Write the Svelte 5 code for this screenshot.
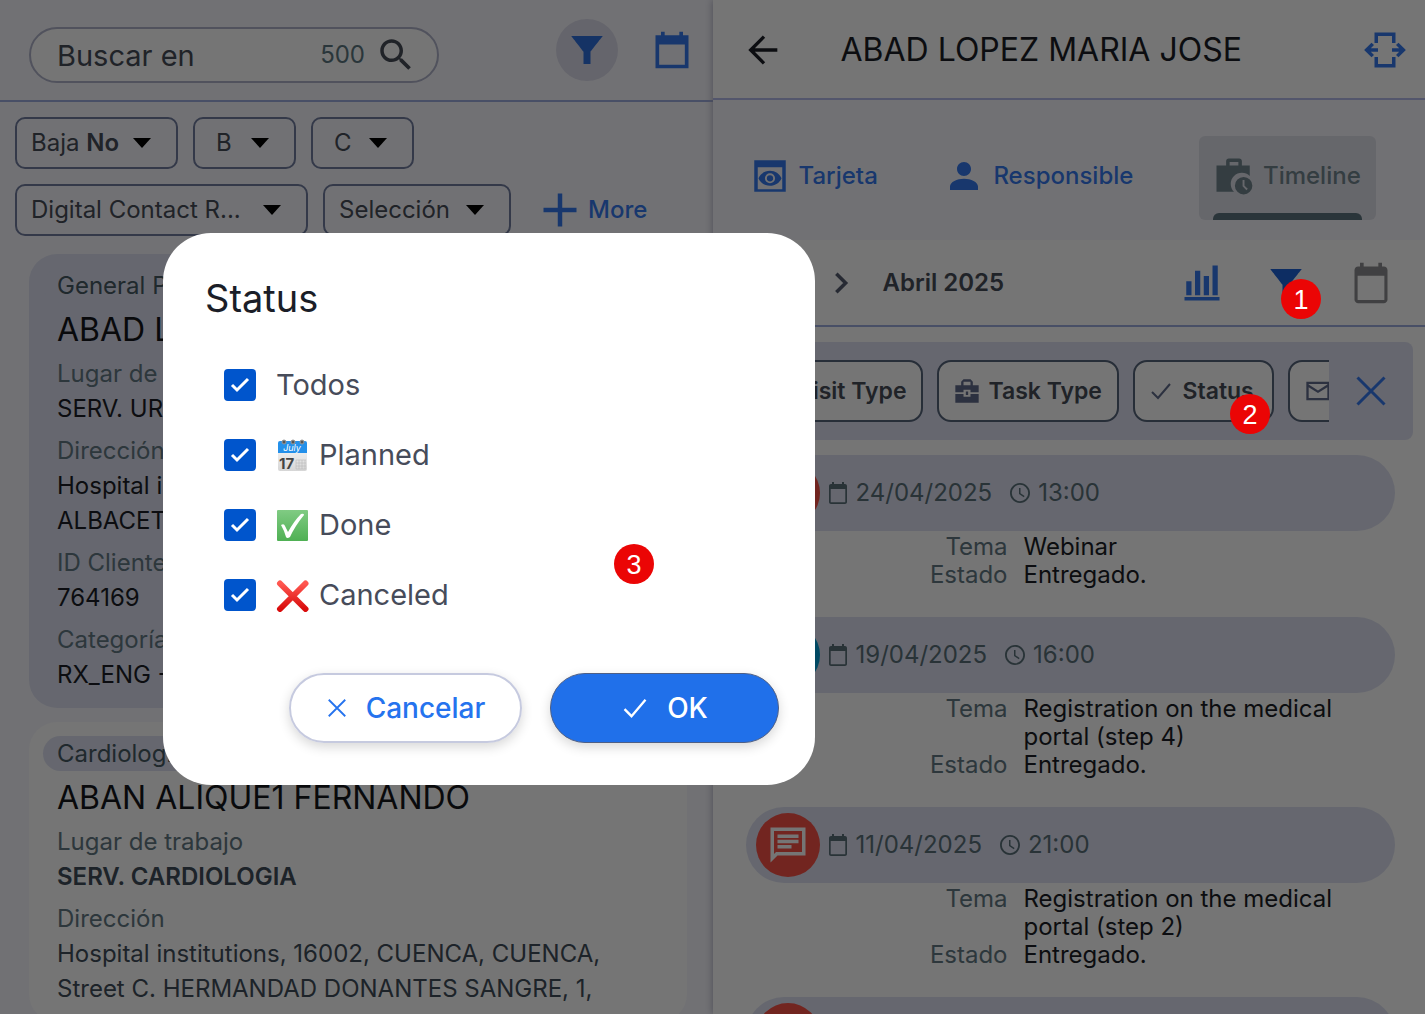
<script>
	let search = $state("");

	const filters = [
		{ label: "Baja", value: "No", size: "md" },
		{ label: "B", size: "sm" },
		{ label: "C", size: "sm" },
		{ label: "Digital Contact R...", size: "xl" },
		{ label: "Selección", size: "lg" },
	];

	const contacts = [
		{
			specialty: "General Practice",
			name: "ABAD LOPEZ MARIA JOSE",
			selected: true,
			fields: [
				{ label: "Lugar de trabajo", lines: ["SERV. URGENCIAS"] },
				{ label: "Dirección", lines: ["Hospital institutions,", "ALBACETE"] },
				{ label: "ID Cliente", lines: ["764169"] },
				{ label: "Categoría", lines: ["RX_ENG - A"] },
			],
		},
		{
			specialty: "Cardiología",
			name: "ABAN ALIQUE1 FERNANDO",
			selected: false,
			fields: [
				{ label: "Lugar de trabajo", lines: ["SERV. CARDIOLOGIA"], strong: true },
				{
					label: "Dirección",
					lines: [
						"Hospital institutions, 16002, CUENCA, CUENCA,",
						"Street C. HERMANDAD DONANTES SANGRE, 1,",
					],
				},
			],
		},
	];

	const events = [
		{ date: "24/04/2025", time: "13:00", color: "red", topic: "Webinar" },
		{ date: "19/04/2025", time: "16:00", color: "cyan", topic: "Registration on the medical portal (step 4)" },
		{ date: "11/04/2025", time: "21:00", color: "red", topic: "Registration on the medical portal (step 2)" },
		{ color: "red" },
	];

	let statuses = $state([
		{ id: "all", label: "Todos", checked: true },
		{ id: "planned", label: "Planned", checked: true },
		{ id: "done", label: "Done", checked: true },
		{ id: "canceled", label: "Canceled", checked: true },
	]);

	// numbered markers that lie over the whole screen
	const markers = [
		{ n: 1, x: 1281, y: 279 },
		{ n: 2, x: 1230, y: 394 },
		{ n: 3, x: 614, y: 544 },
	];

	const paths = {
		search: "M15.5 14h-.79l-.28-.27C15.41 12.59 16 11.11 16 9.5 16 5.91 13.09 3 9.5 3S3 5.91 3 9.5 5.91 16 9.5 16c1.61 0 3.09-.59 4.23-1.57l.27.28v.79l5 4.99L20.49 19l-4.99-5zm-6 0C7.01 14 5 11.99 5 9.5S7.01 5 9.5 5 14 7.01 14 9.5 11.99 14 9.5 14z",
		funnel: "M3 4c2.01 2.59 7 9 7 9v7h4v-7s4.98-6.41 7-9H3z",
		calendar: "M21 4h-3V2h-2v2H8V2H6v2H3v18h18V4zm-2 16H5V9h14v11z",
		calendarRound: "M19 3h-1V1h-2v2H8V1H6v2H5c-1.1 0-2 .9-2 2v16c0 1.1.9 2 2 2h14c1.1 0 2-.9 2-2V5c0-1.1-.9-2-2-2zm.3 18c0 .2-.1.3-.3.3H5c-.2 0-.3-.1-.3-.3V8h14.6v13z",
		person: "M12 12c2.21 0 4-1.79 4-4s-1.79-4-4-4-4 1.79-4 4 1.79 4 4 4zm0 1.500c-4 0-8 1.8-8 4.500v2h16v-2c0-2.700-4-4.500-8-4.500z",
		preview: "M3 3v18h18V3H3zm16 16.500H5V7h14v12.500zM12 9c-3 0-5.500 1.700-6.600 4.300C6.500 15.900 9 17.600 12 17.600s5.500-1.700 6.600-4.300C17.500 10.700 15 9 12 9zm0 7.200a2.900 2.900 0 1 1 0-5.800 2.900 2.900 0 0 1 0 5.800zm0-4.700a1.800 1.800 0 1 0 0 3.600 1.800 1.800 0 0 0 0-3.600z",
		history: "M9 2h6c.8 0 1.500.7 1.500 1.500V6H21v6a6.300 6.300 0 0 0-9 9H2V6h5.500V3.500C7.500 2.700 8.200 2 9 2zM9.500 4v2h5V4h-5zM17.500 12.500a5 5 0 1 1 0 10 5 5 0 0 1 0-10zm-.6 1.800v3.600l2.200 2.200.8-.8-1.900-1.800v-3.200z",
		toolbox: "M9 2h6l2 2v3h5v6h-7v-2H9v2H2V7h5V4zM9 4v3h6V4H9zM2 14.500h7V17h6v-2.500h7V22H2zM11 12.500h2v3h-2z",
		mail: "M22 4H2v16h20V4zm-2 2v.5l-8 5-8-5V6h16zm0 12H4V8.800l8 5 8-5V18z",
		clock: "M12 2C6.480 2 2 6.480 2 12s4.480 10 10 10 10-4.480 10-10S17.520 2 12 2zm0 18.200a8.200 8.200 0 1 1 0-16.400 8.200 8.200 0 0 1 0 16.400zM12.500 7H11v6l4.800 3.200.8-1.300-4.100-2.600z",
		chat: "M4 4h16v12H5.170L4 17.170V4M2 2v20l4-4h16V2H2zm4 10h8v2H6v-2zm0-3h12v2H6V9zm0-3h12v2H6V6z",
		chart: "M3 11h3v8H3zM8 5h3v14H8zM13 8h3v11h-3zM18 2h3v17h-3zM2 20h20v2H2z",
	};

	const strokes = {
		back: "M20 12H4.500M12 4 4 12l8 8",
		next: "M8 4l8 8-8 8",
		plus: "M12 1v22M1 12h22",
		close: "M3 3l18 18M21 3 3 21",
		check: "M3 13l6 6L21 5",
		tick: "M4 12l5 5L20 6",
		transfer: "M7 8V3h10v5M7 16v5h10v-5M1 12h7M5 8.500 1.500 12 5 15.500M16 12h7M19 8.500l3.500 3.500-3.500 3.500",
	};
</script>

{#snippet icon(name, cls)}
	<svg class="icon {cls}" viewBox="0 0 24 24" aria-hidden="true">
		{#if paths[name]}
			<path d={paths[name]} fill="currentColor" fill-rule="evenodd" />
		{:else}
			<path class={name} d={strokes[name]} fill="none" stroke="currentColor" stroke-width="2" />
		{/if}
	</svg>
{/snippet}

<main class="app">
	<section class="list-panel">
		<header class="list-header">
			<label class="search">
				<input type="text" placeholder="Buscar en" aria-label="Buscar en" bind:value={search} />
				<span class="count">500</span>
				{@render icon("search", "s42")}
			</label>
			<button class="round" aria-label="Filter">{@render icon("funnel", "s42")}</button>
			<button class="plain" aria-label="Calendar">{@render icon("calendar", "s44")}</button>
		</header>

		<div class="filters">
			{#each filters as f}
				<button class="filter {f.size}">
					<span>{f.label} {#if f.value}<b>{f.value}</b>{/if}</span>
					<i class="caret"></i>
				</button>
			{/each}
			<button class="more">{@render icon("plus", "s36")} More</button>
		</div>

		<div class="cards">
			{#each contacts as c}
				<article class="card" class:selected={c.selected}>
					<div class="specialty">{c.specialty}</div>
					<h2>{c.name}</h2>
					{#each c.fields as f}
						<dl>
							<dt>{f.label}</dt>
							{#each f.lines as line}
								<dd class:strong={f.strong}>{line}</dd>
							{/each}
						</dl>
					{/each}
				</article>
			{/each}
		</div>
	</section>

	<section class="detail-panel">
		<header class="detail-header">
			<button class="back" aria-label="Back">{@render icon("back", "s40")}</button>
			<h1>ABAD LOPEZ MARIA JOSE</h1>
			<button class="plain" aria-label="Switch">{@render icon("transfer", "s42")}</button>
		</header>

		<nav class="tabs">
			<a href="#card">{@render icon("preview", "s42")} Tarjeta</a>
			<a href="#responsible">{@render icon("person", "s42")} Responsible</a>
			<a href="#timeline" class="active">{@render icon("history", "s42")} Timeline</a>
		</nav>

		<div class="month">
			<button class="next-month" aria-label="Next month">{@render icon("next", "s28")}</button>
			<strong>Abril 2025</strong>
			<button class="plain" aria-label="Statistics">{@render icon("chart", "s42")}</button>
			<button class="plain deep" aria-label="Filter timeline">{@render icon("funnel", "s42")}</button>
			<button class="plain gray" aria-label="Calendar">{@render icon("calendarRound", "s44")}</button>
		</div>

		<div class="types">
			<div class="scroller">
				<button class="type visit">Visit Type</button>
				<button class="type task">{@render icon("toolbox", "s28")} Task Type</button>
				<button class="type status">{@render icon("check", "s24")} Status</button>
				<button class="type mail" aria-label="Mail">{@render icon("mail", "s28")}</button>
			</div>
			<button class="plain" aria-label="Close filters">{@render icon("close", "s36")}</button>
		</div>

		<div class="timeline">
			{#each events as e}
				<article class="event">
					<div class="bar">
						<span class="kind {e.color}">{@render icon("chat", "s42")}</span>
						{#if e.date}
							{@render icon("calendarRound", "s24")}
							<span class="date">{e.date}</span>
							{@render icon("clock", "s24")}
							<span>{e.time}</span>
						{/if}
					</div>
					{#if e.topic}
						<dl class="facts">
							<dt>Tema</dt>
							<dd>{e.topic}</dd>
							<dt>Estado</dt>
							<dd>Entregado.</dd>
						</dl>
					{/if}
				</article>
			{/each}
		</div>
	</section>

	<div class="backdrop"></div>

	<dialog open class="modal" aria-labelledby="modal-title">
		<h2 id="modal-title">Status</h2>
		<div class="options">
			{#each statuses as s}
				<label class="option">
					<span class="box">
						<input type="checkbox" bind:checked={s.checked} />
						{#if s.checked}{@render icon("tick", "s24")}{/if}
					</span>
					{#if s.id === "planned"}
						<svg class="emoji" viewBox="0 0 34 34" aria-hidden="true">
							<defs>
								<linearGradient id="paper" x2="0" y2="1">
									<stop offset="0" stop-color="#fafafa" />
									<stop offset="1" stop-color="#d6d6d6" />
								</linearGradient>
							</defs>
							<rect x="2" y="4" width="29" height="29" rx="2" fill="url(#paper)" />
							<path d="M2 15V5q0-2 2-2h25q2 0 2 2v10z" fill="#2490ea" />
							<g fill="#555" stroke="#999" stroke-width="1">
								<circle cx="8" cy="4" r="2" />
								<circle cx="17" cy="4" r="2" />
								<circle cx="26" cy="4" r="2" />
							</g>
							<path d="M20 22h10M20 25h10M20 28h10M20 31h10M20 22v9M23 22v9M26 22v9M29 22v9" stroke="#bbb" stroke-width="0.600" />
							<text x="16" y="13" class="july">July</text>
							<text x="3" y="31" class="day">17</text>
						</svg>
					{:else if s.id === "done"}
						<svg class="emoji" viewBox="0 0 34 34" aria-hidden="true">
							<defs>
								<linearGradient id="green" x2="0" y2="1">
									<stop offset="0" stop-color="#80cb83" />
									<stop offset="1" stop-color="#4fb054" />
								</linearGradient>
							</defs>
							<rect x="1" y="2" width="31" height="31" rx="1" fill="url(#green)" />
							<path d="M5 17q3-2 4 1l3 6Q18 13 25 6q3-1 3 1-9 11-14 22-3 2-4 0-2-7-5-12z" fill="#fff" />
						</svg>
					{:else if s.id === "canceled"}
						<svg class="emoji" viewBox="0 0 34 34" aria-hidden="true">
							<defs>
								<linearGradient id="red" x2="0" y2="1">
									<stop offset="0" stop-color="#ff5750" />
									<stop offset="1" stop-color="#d90c0c" />
								</linearGradient>
							</defs>
							<path d="M4 5.500 29.500 31M29.500 5.500 4 31" fill="none" stroke="url(#red)" stroke-width="6" stroke-linecap="round" />
						</svg>
					{/if}
					<span>{s.label}</span>
				</label>
			{/each}
		</div>
		<div class="actions">
			<button class="cancel">{@render icon("close", "s22")} Cancelar</button>
			<button class="ok">{@render icon("check", "s28")} OK</button>
		</div>
	</dialog>

	{#each markers as m}
		<span class="marker" style="left: {m.x}px; top: {m.y}px">{m.n}</span>
	{/each}
</main>

<style>
	:global(body) {
		margin: 0;
		overflow: hidden;
	}

	.app {
		position: relative;
		display: flex;
		height: 100vh;
		overflow: hidden;
		background: #f7f7fd;
		color: #474c58;
		font-family: Inter, "Noto Sans", sans-serif;
		font-size: 24px;
		line-height: 28px;
	}

	.app * {
		box-sizing: border-box;
	}

	h1,
	h2,
	dl,
	dd {
		margin: 0;
		font-weight: 400;
	}

	button {
		display: flex;
		align-items: center;
		padding: 0;
		border: 0;
		background: none;
		color: inherit;
		font: inherit;
		white-space: nowrap;
	}

	a {
		text-decoration: none;
	}

	/* icons */
	.icon {
		display: block;
		flex: none;
		width: 24px;
		height: 24px;
	}
	.s22 {
		width: 22px;
		height: 22px;
	}
	.s28 {
		width: 28px;
		height: 28px;
	}
	.s36 {
		width: 36px;
		height: 36px;
	}
	.s40 {
		width: 40px;
		height: 40px;
	}
	.s42 {
		width: 42px;
		height: 42px;
	}
	.s44 {
		width: 44px;
		height: 44px;
	}
	.plus,
	.next,
	.tick {
		stroke-width: 3;
	}

	.plain {
		color: #3579ee;
	}

	/* left side */
	.list-panel {
		display: flex;
		flex: 1;
		flex-direction: column;
		min-width: 0;
	}
	.list-header {
		display: flex;
		flex: none;
		align-items: center;
		height: 102px;
		padding: 0 19px 0 29px;
		border-bottom: 2px solid #9eacdf;
	}
	.search {
		display: flex;
		align-items: center;
		width: 410px;
		height: 56px;
		margin-top: 10px;
		margin-right: auto;
		padding: 0 20px 0 26px;
		border: 2px solid #b0b4ca;
		border-radius: 28px;
		background: #fefefe;
	}
	.search input {
		flex: 1;
		min-width: 0;
		padding: 0;
		border: 0;
		outline: 0;
		background: none;
		color: #474c58;
		font: inherit;
		font-size: 29px;
	}
	.search input::placeholder {
		color: #474c58;
		opacity: 1;
	}
	.count {
		margin-right: 10px;
		color: #5c7780;
	}
	.round {
		justify-content: center;
		width: 62px;
		height: 62px;
		margin-right: 32px;
		border-radius: 50%;
		background: #dcdceb;
		color: #2f6fdc;
	}
	.filters {
		display: flex;
		flex: none;
		flex-wrap: wrap;
		gap: 15px;
		padding: 15px 40px 18px 15px;
	}
	.filter {
		justify-content: space-between;
		height: 52px;
		padding: 0 25px 0 14px;
		border: 2px solid #717d9f;
		border-radius: 10px;
	}
	.filter.sm {
		width: 103px;
		padding-left: 21px;
	}
	.filter.md {
		width: 163px;
	}
	.filter.lg {
		width: 188px;
	}
	.filter.xl {
		width: 293px;
	}
	.filter b {
		font-weight: 600;
	}
	.caret {
		border: 9px solid transparent;
		border-top: 10px solid #000;
		border-bottom: 0;
	}
	.more {
		gap: 10px;
		margin-left: 16px;
		color: #3579ee;
		font-weight: 500;
	}

	.cards {
		display: flex;
		flex-direction: column;
		gap: 14px;
		padding: 0 26px 0 29px;
	}
	.card {
		padding: 14px 28px 16px;
		border-radius: 28px;
		background: #fefefe;
		color: #3f4d59;
		line-height: 35px;
	}
	.card.selected {
		background: #dee1f2;
		color: #1b1e26;
	}
	.specialty {
		width: fit-content;
		margin-left: -14px;
		padding: 0 14px;
		border-radius: 18px;
		background: #dee1f2;
		color: #465963;
	}
	.card h2 {
		color: #15161b;
		font-size: 32px;
		line-height: 53px;
		white-space: nowrap;
	}
	.card dl + dl {
		margin-top: 7px;
	}
	.card dt {
		color: #627883;
	}
	.card dd {
		white-space: nowrap;
	}
	.card .strong {
		font-weight: 600;
	}

	/* right side */
	.detail-panel {
		display: flex;
		flex: 1;
		flex-direction: column;
		min-width: 0;
		background: #fefefe;
		box-shadow: 0 0 8px #a4a4b8;
	}
	.detail-header {
		display: flex;
		flex: none;
		align-items: center;
		height: 100px;
		padding: 2px 19px 0 31px;
		border-bottom: 2px solid #b6bcec;
	}
	.back {
		color: #1b1e26;
	}
	.detail-header h1 {
		flex: 1;
		margin-left: 57px;
		color: #1b1e26;
		font-size: 32px;
		line-height: 40px;
	}
	.tabs {
		display: flex;
		flex: none;
		align-items: center;
		justify-content: space-between;
		height: 140px;
		padding: 16px 49px 0 36px;
		background: #f7f7fd;
		font-weight: 500;
	}
	.tabs a {
		display: flex;
		align-items: center;
		gap: 8px;
		padding-bottom: 4px;
		color: #3579ee;
	}
	.tabs .active {
		position: relative;
		width: 177px;
		height: 84px;
		padding-left: 14px;
		border-radius: 6px;
		background: #dfe0e9;
		color: #71868f;
	}
	.active::after {
		position: absolute;
		right: 14px;
		bottom: 0;
		left: 14px;
		height: 7px;
		border-radius: 6px 6px 0 0;
		background: #5d737e;
		content: "";
	}
	.month {
		display: flex;
		flex: none;
		align-items: center;
		height: 87px;
		padding: 0 32px 0 114px;
		border-bottom: 2px solid #9eacdf;
	}
	.next-month {
		margin-right: 28px;
		color: #565d70;
	}
	.month strong {
		flex: 1;
		font-weight: 600;
	}
	.month .plain + .plain {
		margin-left: 42px;
	}
	.month .deep {
		color: #1d63d8;
	}
	.month .gray {
		color: #8d8d90;
	}

	.types {
		display: flex;
		flex: none;
		align-items: center;
		height: 98px;
		margin: 15px 12px 0 14px;
		padding: 0 24px 0 14px;
		border-radius: 8px;
		background: #dfe1f2;
	}
	.scroller {
		display: flex;
		flex: 1;
		gap: 14px;
		min-width: 0;
		margin-right: 24px;
		overflow: hidden;
	}
	.type {
		flex: none;
		gap: 8px;
		height: 62px;
		padding: 0 14px;
		border: 2px solid #55647a;
		border-radius: 14px;
		background: #fefefe;
		font-size: 23px;
		font-weight: 600;
	}
	.type .icon {
		color: #606b8b;
	}
	.visit {
		justify-content: flex-end;
		width: 182px;
	}
	.task {
		width: 182px;
	}
	.status {
		gap: 10px;
		width: 141px;
	}
	.mail {
		width: 141px;
	}

	.timeline {
		padding: 15px 30px 0 33px;
	}
	.event {
		margin-bottom: 28px;
	}
	.bar {
		display: flex;
		align-items: center;
		gap: 6px;
		height: 76px;
		margin-bottom: 2px;
		padding-left: 10px;
		border-radius: 38px;
		background: #dee1f2;
		color: #597079;
	}
	.date {
		margin-right: 10px;
	}
	.kind {
		display: grid;
		place-items: center;
		width: 64px;
		height: 64px;
		border-radius: 50%;
		color: #fff;
	}
	.kind.red {
		background: #f95146;
	}
	.kind.cyan {
		background: #03a0d8;
	}
	.facts {
		display: grid;
		grid-template-columns: 262px 1fr;
		column-gap: 16px;
		padding-right: 32px;
	}
	.facts dt {
		color: #627883;
		text-align: right;
	}
	.facts dd {
		color: #1b1e26;
	}

	/* dialog */
	.backdrop {
		position: absolute;
		inset: 0;
		background: rgba(0, 0, 0, 0.54);
	}
	.modal {
		position: absolute;
		top: 233px;
		left: 163px;
		width: 652px;
		margin: 0;
		padding: 42px 36px 42px 42px;
		border: 0;
		border-radius: 48px;
		background: #fff;
		color: #474c5a;
		font-size: 29px;
	}
	.modal h2 {
		color: #1b1e28;
		font-size: 38px;
		line-height: 46px;
	}
	.options {
		display: flex;
		flex-direction: column;
		gap: 38px;
		margin-top: 48px;
		padding-left: 19px;
	}
	.option {
		display: flex;
		align-items: center;
		gap: 9px;
		height: 32px;
	}
	.box {
		display: grid;
		place-items: center;
		width: 32px;
		height: 32px;
		margin-right: 11px;
		color: #fff;
	}
	.box > :global(*) {
		grid-area: 1 / 1;
	}
	.box input {
		width: 32px;
		height: 32px;
		margin: 0;
		border: 2px solid #0055cc;
		border-radius: 4px;
		appearance: none;
	}
	.box input:checked {
		background: #0055cc;
	}
	.box .icon {
		z-index: 1;
		pointer-events: none;
	}
	.emoji {
		width: 34px;
		height: 34px;
	}
	.july {
		fill: #fff;
		font-size: 9px;
		font-style: italic;
		text-anchor: middle;
	}
	.day {
		fill: #444;
		font-size: 15px;
		font-weight: 700;
	}
	.actions {
		display: flex;
		justify-content: flex-end;
		gap: 28px;
		margin-top: 62px;
	}
	.actions button {
		justify-content: center;
		gap: 18px;
		height: 70px;
		border: 2px solid #c6cadf;
		border-radius: 35px;
		box-shadow: 0 4px 12px rgba(0, 0, 0, 0.16);
		color: #2573ee;
		font-size: 28px;
		font-weight: 500;
	}
	.actions .cancel {
		width: 233px;
	}
	.actions .ok {
		width: 229px;
		border: 1px solid #4e5f85;
		background: #2070ea;
		color: #fff;
	}

	.marker {
		position: absolute;
		width: 40px;
		height: 40px;
		border-radius: 50%;
		background: #eb0505;
		color: #fff;
		font-family: "Liberation Sans", Arial, sans-serif;
		font-size: 27px;
		line-height: 42px;
		text-align: center;
	}
</style>
